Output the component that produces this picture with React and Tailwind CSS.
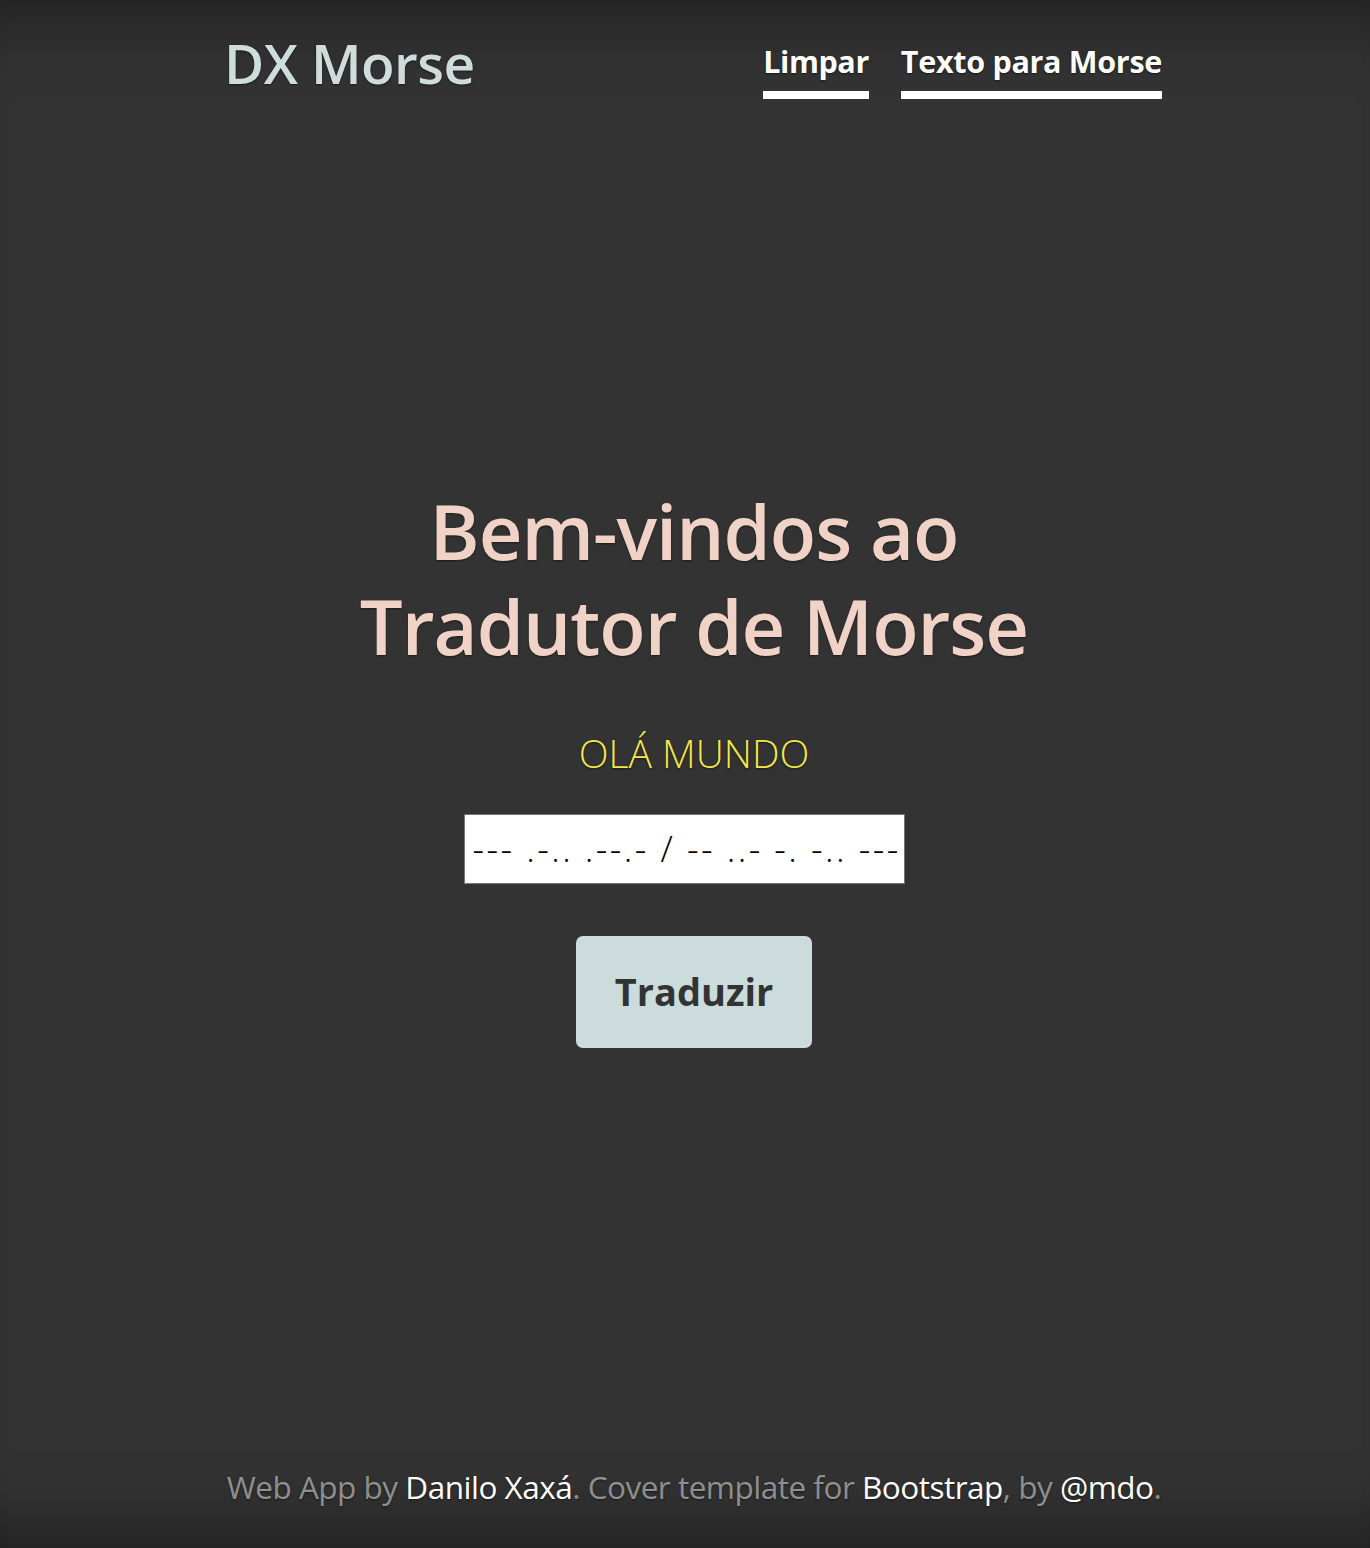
import React from 'react';

const font = { fontFamily: '"Open Sans", "Noto Sans", sans-serif' };

const App = () => {
    return (
        <div
            style={font}
            className="min-h-[1548px] flex flex-col bg-[#333333] text-white [text-shadow:0_1px_2px_rgba(0,0,0,0.5)] shadow-[inset_0_90px_80px_-80px_rgba(0,0,0,0.45),inset_0_-90px_80px_-80px_rgba(0,0,0,0.45)]"
        >
            <div className="w-[936px] ml-[226px] flex flex-col flex-1">
                {/* header */}
                <header className="flex items-start justify-between pt-[30px]">
                    <h3 className="text-[55px] leading-[66px] font-semibold text-[#cfdcdc] tracking-[-0.6px] -ml-[2px]">DX Morse</h3>
                    <nav className="flex gap-[32px] pt-[11px]">
                        <a className="text-[30.5px] leading-[40px] font-bold text-white border-b-[8px] border-white pb-[10px] tracking-[-0.4px]">Limpar</a>
                        <a className="text-[30.5px] leading-[40px] font-bold text-white border-b-[8px] border-white pb-[10px] tracking-[-0.3px]">Texto para Morse</a>
                    </nav>
                </header>

                {/* main */}
                <main className="flex-1 flex flex-col items-center justify-center pb-[36px]">
                    <h1 className="text-[76px] leading-[95px] font-semibold text-[#f0d2c6] text-center tracking-[-1px]">
                        Bem-vindos ao<br />Tradutor de Morse
                    </h1>
                    <p className="mt-[52px] text-[39px] leading-[56px] font-light text-[#f2e84a]">OLÁ MUNDO</p>
                    <div className="mt-[33px] mr-[20px] w-[441px] h-[70px] bg-white border border-[#767676] flex items-center px-[8px] overflow-hidden [text-shadow:none]">
                        <span className="text-[36px] leading-[40px] font-light text-black whitespace-nowrap tracking-[2.4px]">--- .-.. .--.- / -- ..- -. -.. ---</span>
                    </div>
                    <button className="mt-[52px] w-[236px] h-[112px] rounded-[7px] bg-[#ccdcdc] text-[#333333] text-[38px] font-bold [text-shadow:none]">
                        Traduzir
                    </button>
                </main>

                {/* footer */}
                <footer className="pb-[41px] text-center">
                    <p className="text-[31.5px] leading-[40px] text-white/50 tracking-[-0.5px] whitespace-nowrap">
                        Web App by <a className="text-white">Danilo Xaxá</a>. Cover template for <a className="text-white">Bootstrap</a>, by <a className="text-white">@mdo</a>.
                    </p>
                </footer>
            </div>
        </div>
    );
};

export default App;
